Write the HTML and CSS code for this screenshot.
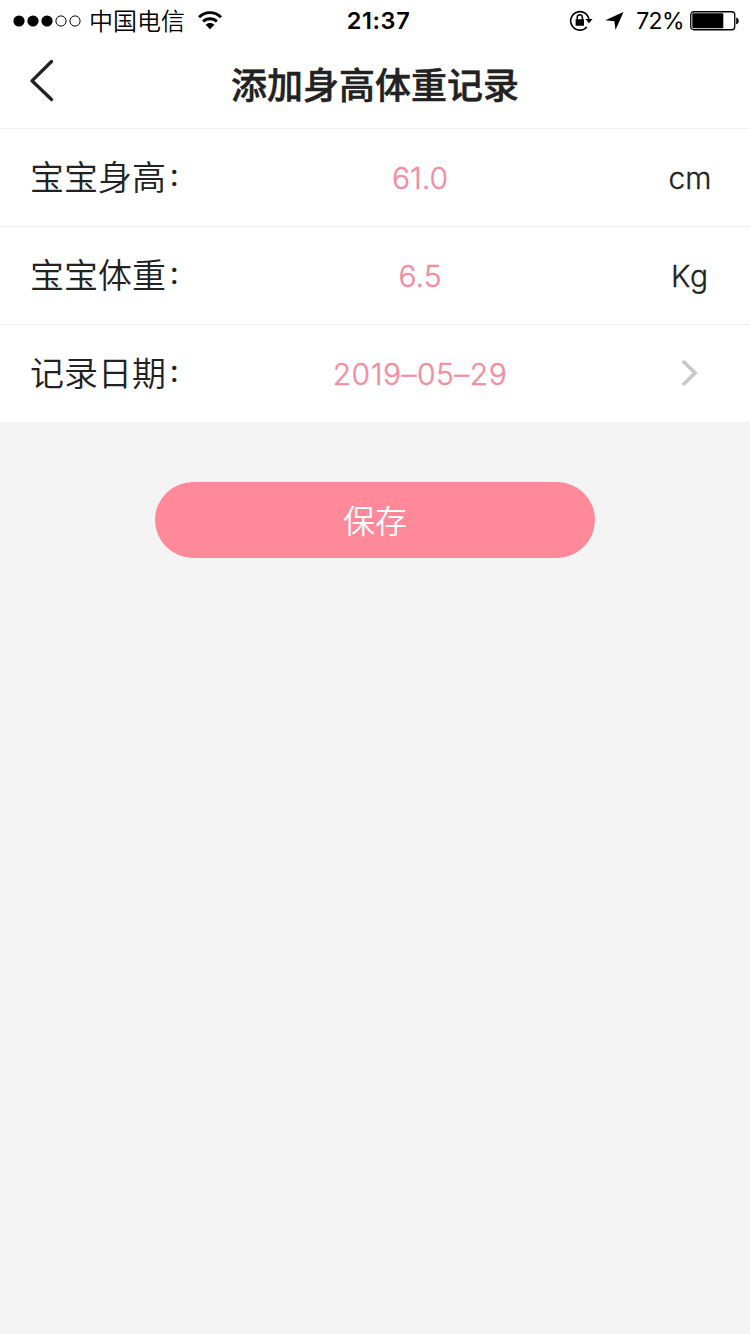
FILE: index.html
```html
<!DOCTYPE html>
<html lang="zh-CN">
<head>
<meta charset="utf-8">
<title>添加身高体重记录</title>
<link rel="stylesheet" href="styles.css">
</head>
<body>
<header class="top">
  <div class="status">
    <div class="status-left">
      <svg class="signal" width="68" height="12" viewBox="0 0 68 12">
        <circle cx="6" cy="6" r="5.6"/><circle cx="20" cy="6" r="5.6"/><circle cx="34" cy="6" r="5.6"/>
        <circle class="hollow" cx="48" cy="6" r="5.1"/><circle class="hollow" cx="62" cy="6" r="5.1"/>
      </svg>
      <span class="carrier">中国电信</span>
      <svg class="wifi" width="24" height="19" viewBox="0 0 24 19">
        <path class="wave" d="M1 6.2C7.2 0 16.8 0 23 6.2M5.1 10.6C9 6.8 15 6.8 18.9 10.6"/>
        <path d="M7.6 13.7C10.2 11.4 13.8 11.4 16.4 13.7L12 18.2Z"/>
      </svg>
    </div>
    <span class="clock">21:37</span>
    <div class="status-right">
      <svg class="lock" width="25" height="22" viewBox="0 0 25 22">
        <path class="ring" d="M17.8 16.9A9.2 9.2 0 1 1 19.9 9.3"/>
        <path d="M16.4 9H23.6L20 13.2ZM6.6 9.2H15V15.8H6.6Z"/>
        <path class="shackle" d="M8.2 10V7.7A2.6 2.9 0 0 1 13.4 7.7V10"/>
      </svg>
      <svg class="location" width="19" height="18" viewBox="0 0 19 18"><path d="M18.5 0L10.5 18L9.4 9.2L0.3 8.3Z"/></svg>
      <span class="percent">72%</span>
      <svg class="battery" width="50" height="20" viewBox="0 0 50 20">
        <rect class="case" x=".75" y=".75" width="44" height="18" rx="3"/>
        <rect x="2.3" y="2.3" width="31" height="15" rx="1"/>
        <path d="M46.2 6.5C49.6 7 49.6 12.8 46.2 13.3Z"/>
      </svg>
    </div>
  </div>
  <nav class="nav">
    <svg class="back" width="26" height="44" viewBox="0 0 26 44"><path d="M22.5 2.5L3 21.8L22.5 40.5"/></svg>
    <h1 class="title">添加身高体重记录</h1>
  </nav>
</header>
<main class="form">
  <div class="row">
    <span class="label">宝宝身高<span class="colon">：</span></span>
    <span class="value">61.0</span>
    <span class="unit">cm</span>
  </div>
  <div class="row">
    <span class="label">宝宝体重<span class="colon">：</span></span>
    <span class="value">6.5</span>
    <span class="unit unit-kg">Kg</span>
  </div>
  <div class="row">
    <span class="label">记录日期<span class="colon">：</span></span>
    <span class="value value-date">2019–05–29</span>
    <span class="unit"><svg class="chevron" width="20" height="28" viewBox="0 0 20 28"><path d="M2.8 1L15.2 13L2.8 25"/></svg></span>
  </div>
</main>
<button class="save" type="button">保存</button>
</body>
</html>
```
FILE: styles.css
```css
* { box-sizing: border-box; }

body {
  margin: 0;
  min-height: 1334px;
  background: #f4f4f4;
  color: #222;
  font-family: Inter, "Noto Sans CJK SC", sans-serif;
}

svg { display: block; flex: none; }

.top, .form { background: #fff; }

.status {
  display: grid;
  grid-template-columns: 1fr auto 1fr;
  align-items: center;
  height: 40px;
  padding: 0 10px 0 13px;
  color: #000;
}

.status-left, .status-right { display: flex; align-items: center; }
.signal { margin-top: 1px; }
.status-right { justify-content: flex-end; padding-top: 1px; }
.hollow { fill: none; stroke: #000; stroke-width: 1; }

.carrier {
  margin-left: 8px;
  font: 350 24px/40px "Noto Sans CJK SC", sans-serif;
}

.wifi { margin-left: 13px; }
.wave { fill: none; stroke: #000; stroke-width: 2.8; }

.clock {
  padding: 1px 0 0 4px;
  font-size: 23.5px;
  font-weight: 600;
  letter-spacing: 0.6px;
}

.ring { fill: none; stroke: #000; stroke-width: 1.6; }
.shackle { fill: none; stroke: #000; stroke-width: 1.5; }
.location { margin-left: 11px; }

.percent {
  margin: 0 6px 0 12px;
  font-size: 23px;
  letter-spacing: -0.6px;
}

.case { fill: none; stroke: #000; stroke-width: 1.3; }

.nav {
  display: grid;
  grid-template-columns: 100px 1fr 100px;
  height: 89px;
  border-bottom: 1px solid #f2f2f2;
}

.back { margin: 19px 0 0 29px; }
.back path { fill: none; stroke: #222; stroke-width: 3.3; stroke-linecap: round; stroke-linejoin: round; }

.title {
  margin: 0;
  text-align: center;
  font: 500 36px/86px "Noto Sans CJK SC", sans-serif;
  -webkit-text-stroke: 0.5px #222;
}

.row {
  display: grid;
  grid-template-columns: 180px 420px 120px;
  grid-template-rows: 97px;
  height: 98px;
  padding-left: 30px;
  border-bottom: 1px solid #f2f2f2;
}

.row:last-child { height: 97px; border-bottom: 0; }

.label {
  font-family: "Noto Sans CJK SC", sans-serif;
  font-size: 34px;
  font-weight: 350;
  line-height: 94px;
  white-space: nowrap;
}

.colon {
  margin-left: 2px;
  font-size: 25px;
  font-weight: 500;
  line-height: 0;
  vertical-align: 4px;
}

.value {
  text-align: center;
  color: #f28c9e;
  font-size: 30px;
  font-weight: 300;
  line-height: 98px;
  -webkit-text-stroke: 0.35px #f28c9e;
}

.value-date { letter-spacing: 0.5px; }

.unit {
  display: flex;
  align-items: center;
  justify-content: center;
  padding-top: 1px;
  font-size: 30px;
  font-weight: 300;
  -webkit-text-stroke: 0.35px #222;
}

.unit-kg { letter-spacing: 0.8px; }

.chevron path { fill: none; stroke: #c7c7cc; stroke-width: 3.5; }

.save {
  display: block;
  width: 440px;
  height: 76px;
  margin: 60px auto 0;
  padding: 0 0 2px;
  border: 0;
  border-radius: 38px;
  background: #ff8999;
  color: #fff;
  font: 350 32px/74px "Noto Sans CJK SC", sans-serif;
}
```
